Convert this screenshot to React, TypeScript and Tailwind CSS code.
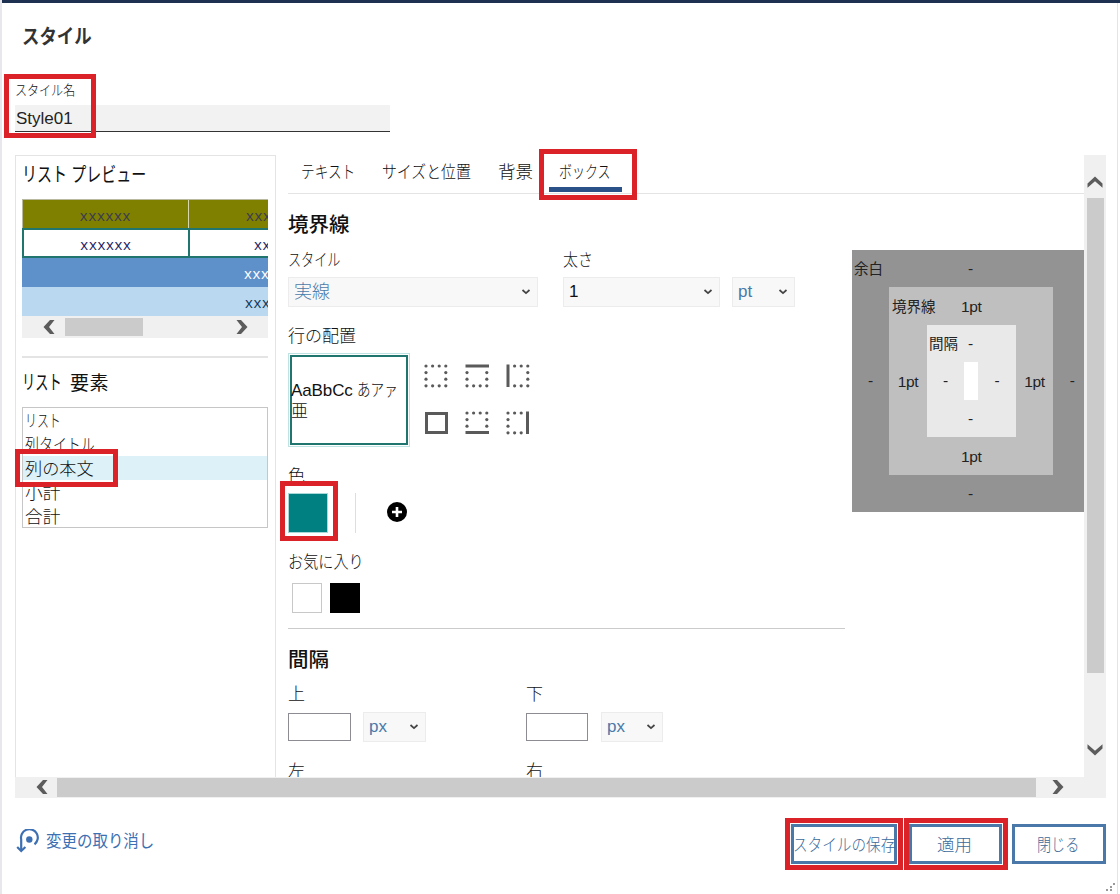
import { type ReactNode } from 'react';

const previewRows = [
  { id: 'title', a: 'xxxxxx', b: 'xxx' },
  { id: 'body', a: 'xxxxxx', b: 'xx' },
];

const elements = [
  { label: 'リスト', fit: 'scale-x-[.7]' },
  { label: '列タイトル', fit: 'scale-x-[.82]' },
  { label: '列の本文', fit: 'scale-x-[1.01]', selected: true },
  { label: '小計', fit: 'scale-x-[1.04]' },
  { label: '合計', fit: 'scale-x-[1.04]' },
];

// Red frames laid over the dialog
const marks = [
  'left-[4px] top-[74px] w-[92px] h-[64px]',
  'left-[15px] top-[449px] w-[103px] h-[38px]',
  'left-[539px] top-[149px] w-[98px] h-[51px]',
  'left-[280px] top-[481px] w-[58px] h-[60px]',
  'left-[785px] top-[818px] w-[118px] h-[52px]',
  'left-[904px] top-[818px] w-[104px] h-[52px]',
];

// Condensed Japanese label
function Ja({ children, fit = '', className = '' }: { children: ReactNode; fit?: string; className?: string }) {
  return <span className={`inline-block origin-left whitespace-nowrap ${fit} ${className}`}>{children}</span>;
}

function Arrow({ d, className = '' }: { d: string; className?: string }) {
  return (
    <svg className={`shrink-0 ${className}`} width="16" height="16" viewBox="0 0 16 16" fill="#5c5c5c">
      <path d={d} />
    </svg>
  );
}

const LEFT = 'M9 1h4.500L8 8l5.500 7H9L2.500 8z';
const RIGHT = 'M7 1H2.500L8 8l-5.500 7H7l6.500-7z';
const UP = 'M.500 9.500v4.200L8 7.200l7.500 6.500V9.500L8 2.500z';
const DOWN = 'M.500 6.500V2.300L8 8.800l7.500-6.500v4.200L8 13.500z';

function Select({ children, className }: { children: ReactNode; className: string }) {
  return (
    <div className={`flex h-[30px] items-center justify-between border border-[#ececec] bg-[#f8f8f8] pl-[5px] pr-[6px] text-[17px] leading-[28px] ${className}`}>
      {children}
      <svg width="10" height="8" viewBox="0 0 10 8" fill="none" stroke="#444" strokeWidth="1.7">
        <path d="M1.500 2L5 5.200 8.500 2" />
      </svg>
    </div>
  );
}

type Side = 'none' | 'top' | 'left' | 'all' | 'bottom' | 'right';

function BorderIcon({ side }: { side: Side }) {
  const dots: [number, number][] = [];
  const at = [2, 8.6, 15.2, 21.8];
  at.forEach(x => at.forEach(y => {
    const edge = x === 2 || x === 21.8 || y === 2 || y === 21.8;
    const hidden = (side === 'top' && y === 2) || (side === 'bottom' && y === 21.8)
      || (side === 'left' && x === 2) || (side === 'right' && x === 21.8);
    if (edge && !hidden) dots.push([x, y]);
  }));
  return (
    <svg width="24" height="24" viewBox="0 0 24 24" fill="#5a5a5a">
      {side === 'all'
        ? <rect x="2.500" y="2.500" width="20" height="19" fill="none" stroke="#5a5a5a" strokeWidth="3" />
        : dots.map(([x, y]) => <circle key={`${x}-${y}`} cx={x} cy={y} r="1.6" />)}
      {side === 'top' && <rect x="0.500" y="0.500" width="23.500" height="3" />}
      {side === 'bottom' && <rect x="0.500" y="20" width="23.500" height="3" />}
      {side === 'left' && <rect x="0.500" y="0.500" width="3" height="22.500" />}
      {side === 'right' && <rect x="20" y="0.500" width="3" height="22.500" />}
    </svg>
  );
}

function SpacingField({ label, short }: { label: string; short?: boolean }) {
  return (
    <div className={short ? 'w-[137px]' : 'w-[238px]'}>
      <div className="h-[28px] pt-px text-[17px] font-light leading-[20px]">{label}</div>
      <div className="flex items-center">
        <div className={`h-[28px] border border-[#8c8c92] bg-white ${short ? 'w-[62px]' : 'w-[63px]'}`} />
        <Select className={`text-[#4b7aa8] ${short ? 'ml-[13px] w-[62px]' : 'ml-3 w-[63px]'}`}><span>px</span></Select>
      </div>
    </div>
  );
}

function ListPanel() {
  return (
    <div className="flex w-[261px] shrink-0 flex-col border-x border-t border-[#e4e4e4] pl-[6px] pr-[7px]">
      <h2 className="h-[43px] pt-[6px] text-[20px] leading-[26px]"><Ja fit="scale-x-[.75]">リスト プレビュー</Ja></h2>
      <div className="h-[117px] overflow-hidden text-[15px] text-[#1f1f66] [font-family:'Open_Sans',sans-serif]">
        {previewRows.map(row => (
          <div
            key={row.id}
            className={row.id === 'title'
              ? 'flex h-[29px] border-l border-t border-[#b9b9a0] bg-[#808000] leading-[31px] text-[#3c3c50]'
              : 'flex h-[30px] border-y-2 border-l-2 border-[#20756f] leading-[28px]'}
          >
            <span className={row.id === 'title' ? 'w-[166px] shrink-0 border-r border-[#d8d8b0] text-center' : 'w-[166px] shrink-0 border-r-2 border-[#20756f] text-center'}>
              <Ja className="tracking-[.7px]">{row.a}</Ja>
            </span>
            <span className={row.id === 'title' ? 'pl-[57px]' : 'pl-[64px]'}><Ja className="tracking-[.7px]">{row.b}</Ja></span>
          </div>
        ))}
        <div className="h-[29px] bg-[#5e90ca] pl-[222px] leading-[30px] tracking-[.7px] text-white">xxx</div>
        <div className="h-[29px] bg-[#bad9f0] pl-[223px] leading-[30px] tracking-[.7px] text-[#123a5a]">xxx</div>
      </div>
      <div className="flex h-[22px] items-center bg-[#f0f0f0] pl-[19px]">
        <Arrow d={LEFT} />
        <div className="ml-2 h-[18px] w-[78px] bg-[#cbcbcb]" />
        <Arrow d={RIGHT} className="ml-[91px]" />
      </div>
      <div className="mt-[18px] border-t-2 border-[#e4e4e4]" />
      <h2 className="mt-3 h-[37px] text-[20px] leading-[26px]">
        <Ja fit="scale-x-[.66]">リスト</Ja><Ja className="-ml-[12px] text-[19px] tracking-[.6px]">要素</Ja>
      </h2>
      <ul className="h-[121px] overflow-hidden border border-[#c6c6c6] text-[17px] font-light text-[#111]">
        {elements.map(el => (
          <li key={el.label} className={`h-6 pl-[2px] leading-[27px] ${el.selected ? 'bg-[#dcf1f8]' : ''}`}>
            <Ja fit={el.fit}>{el.label}</Ja>
          </li>
        ))}
      </ul>
    </div>
  );
}

function BoxModel() {
  return (
    <div className="mt-[56px] h-[262px] w-[232px] shrink-0 bg-[#939393] text-[15.5px] leading-[18px] text-[#222]">
      <div className="flex h-[37px] items-center">
        <span className="w-[116px] pl-[2px] text-[14.5px]">余白</span><span>-</span>
      </div>
      <div className="flex">
        <span className="flex w-[37px] shrink-0 items-center justify-center">-</span>
        <div className="h-[188px] w-[164px] shrink-0 bg-[#bfbfbf]">
          <div className="flex h-[38px] items-center pt-[2px]">
            <span className="w-[72px] pl-[3px] text-[14.5px]">境界線</span><span className="tracking-[-.4px]">1pt</span>
          </div>
          <div className="flex">
            <span className="flex w-[38px] shrink-0 items-center justify-center pt-[2px] tracking-[-.4px]">1pt</span>
            <div className="h-[112px] w-[89px] shrink-0 bg-[#e9e9e9]">
              <div className="flex h-[37px] items-center pt-px">
                <span className="w-[41px] pl-[2px] text-[14.5px]">間隔</span><span>-</span>
              </div>
              <div className="flex h-[38px] items-center">
                <span className="w-[37px] text-center">-</span>
                <div className="h-full w-[14px] bg-white" />
                <span className="w-[38px] text-center">-</span>
              </div>
              <div className="flex h-[37px] items-center pl-[41px]">-</div>
            </div>
            <span className="flex w-[37px] shrink-0 items-center justify-center pt-[2px] tracking-[-.4px]">1pt</span>
          </div>
          <div className="flex h-[38px] items-center pl-[72px] pt-[2px] tracking-[-.4px]">1pt</div>
        </div>
        <span className="flex w-[31px] items-center justify-end pr-[9px]">-</span>
      </div>
      <div className="flex h-[37px] items-center pl-[116px]">-</div>
    </div>
  );
}

function BoxForm() {
  return (
    <div className="w-[557px] shrink-0 text-[17px] font-light leading-[22px]">
      <h2 className="mt-[19px] text-[20.500px] font-medium leading-[24px]">境界線</h2>
      <div className="mt-[13px] flex">
        <div className="w-[275px]">
          <Ja fit="scale-x-[.77]">スタイル</Ja>
          <Select className="mt-[5px] w-[250px] text-[#4b7aa8]"><span className="text-[18px]">実線</span></Select>
        </div>
        <div className="w-[169px]">
          <Ja fit="scale-x-[.88]">太さ</Ja>
          <Select className="mt-[5px] w-[157px]"><span>1</span></Select>
        </div>
        <Select className="mt-[27px] w-[63px] text-[#4b7aa8]"><span>pt</span></Select>
      </div>

      <div className="mt-[19px]"><Ja>行の配置</Ja></div>
      <div className="mt-[5px] flex">
        <div className="h-[94px] w-[122px] border border-[#bfe3e3] p-px">
          <div className="h-full border-2 border-[#20756f] pt-[23px] leading-[21px]">
            <div className="-ml-px whitespace-nowrap"><span className="tracking-[-.1px]">AaBbCc </span><Ja fit="scale-x-[.8]">あアァ</Ja></div>
            <div className="-ml-px">亜</div>
          </div>
        </div>
        <div className="ml-[14px] mt-[11px] grid h-[72px] grid-cols-[41px_41px_24px] grid-rows-[47px_24px]">
          {(['none', 'top', 'left', 'all', 'bottom', 'right'] as Side[]).map(side => <BorderIcon key={side} side={side} />)}
        </div>
      </div>

      <div className="mt-[19px]">色</div>
      <div className="mt-[5px] flex h-10 items-center">
        <div className="h-10 w-10 border border-[#a9d8d8] bg-[#008080]" />
        <div className="ml-[27px] h-10 border-l border-[#dedede]" />
        <svg className="-mt-[2px] ml-[31px]" width="20" height="20" viewBox="0 0 20 20">
          <circle cx="10" cy="10" r="10" />
          <path d="M5 10h10M10 5v10" stroke="white" strokeWidth="2.600" />
        </svg>
      </div>

      <div className="mt-[19px]"><Ja fit="scale-x-[.89]">お気に入り</Ja></div>
      <div className="mt-[9px] flex gap-2 pl-1">
        <div className="h-[30px] w-[30px] border border-[#c8c8c8]" />
        <div className="h-[30px] w-[30px] bg-black" />
      </div>
      <div className="mt-[15px] border-t border-[#cbcbcb]" />
      <h2 className="mt-[19px] text-[20.500px] font-medium leading-[24px]">間隔</h2>
      <div className="mt-[12px] flex"><SpacingField label="上" /><SpacingField label="下" short /></div>
      <div className="mt-[19px] flex"><SpacingField label="左" /><SpacingField label="右" short /></div>
    </div>
  );
}

function Tabs() {
  return (
    <div className="flex h-[39px] border-b border-[#e4e4e4] pl-[13px] pt-[5px] text-[17.5px] font-light leading-[24px]">
      <div className="w-[81px]"><Ja fit="scale-x-[.78]">テキスト</Ja></div>
      <div className="w-[116px]"><Ja fit="scale-x-[.85]">サイズと位置</Ja></div>
      <div className="w-[51px]"><Ja>背景</Ja></div>
      <div className="h-[32px] w-[73px] border-b-[5px] border-[#2b5288] pl-[10px]"><Ja fit="scale-x-[.74]">ボックス</Ja></div>
    </div>
  );
}

export default function App() {
  return (
    <div className="relative flex h-[894px] w-[1120px] flex-col overflow-hidden border-l-2 border-l-[#e8e8ec] bg-white text-[#111] [font-family:'Liberation_Sans','Noto_Sans_CJK_JP',sans-serif]">
      <div className="h-[3px] shrink-0 bg-[#1f3150]" />
      <h1 className="ml-5 mt-[21px] h-[54px] text-[20px] font-bold leading-[26px] text-[#333]"><Ja fit="scale-x-[.87]">スタイル</Ja></h1>
      <div className="ml-[13px] w-[375px]">
        <div className="mt-[2px] h-[25px] text-[14px] font-light leading-[20px]"><Ja fit="scale-x-[.86]">スタイル名</Ja></div>
        <div className="h-[27px] border-b border-[#333] bg-[#f2f2f2] pl-px text-[17px] leading-[27px] text-[#222]">Style01</div>
      </div>

      <div className="ml-[13px] mt-[23px] w-[1091px]">
        <div className="flex h-[622px] overflow-hidden">
          <ListPanel />
          <div className="w-[808px] shrink-0 pl-3">
            <Tabs />
            <div className="flex gap-[7px]">
              <BoxForm />
              <BoxModel />
            </div>
          </div>
          <div className="flex w-[22px] flex-col items-center bg-[#f0f0f0] pt-[19px]">
            <Arrow d={UP} />
            <div className="mt-2 h-[475px] w-[17px] shrink-0 bg-[#cbcbcb]" />
            <Arrow d={DOWN} className="mt-[69px]" />
          </div>
        </div>
        <div className="flex h-[21px] items-center bg-[#f0f0f0] pl-[19px]">
          <Arrow d={LEFT} className="-mt-px" />
          <div className="ml-[7px] h-[19px] w-[979px] bg-[#cbcbcb]" />
          <Arrow d={RIGHT} className="-mt-px ml-[14px]" />
        </div>
      </div>

      <div className="ml-[14px] mt-[26px] flex h-[40px] w-[1090px] text-[17px]">
        <div className="flex h-[36px] flex-1 items-center text-[#3d70b2]">
          <svg className="-mt-[3px]" width="24" height="24" viewBox="0 0 24 24" fill="none" stroke="#3d70b2" strokeWidth="2.200">
            <path d="M5.200 21.500V10.500a8.400 8.400 0 1 1 13.300 4.800" />
            <path d="M1.200 18L5.200 22l4.200-4" />
            <circle cx="13.300" cy="10.500" r="3.200" fill="#3d70b2" stroke="none" />
          </svg>
          <Ja fit="scale-x-[.91]" className="ml-[6px]">変更の取り消し</Ja>
        </div>
        <button className="h-10 w-[106px] border-[3px] border-[#4a78a8] pt-[3px] text-left font-light text-[#3c6a9a]"><Ja fit="scale-x-[.86]" className="w-[100px] -translate-x-px">スタイルの保存</Ja></button>
        <button className="ml-3 h-10 w-[93px] border-[3px] border-[#4a78a8] pr-[2px] pt-[3px] text-[17.5px] font-light text-[#3c6a9a]">適用</button>
        <button className="ml-[10px] h-10 w-[94px] border-[3px] border-[#4a78a8] pl-[22px] pt-[3px] text-left font-light text-[#3c6a9a]"><Ja fit="scale-x-[.83]">閉じる</Ja></button>
      </div>

      {/* Slivers of the page behind the dialog */}
      <div className="absolute -left-[2px] top-[100px] h-[36px] w-[2px] border-b-[6px] border-black bg-[#8a8840]" />
      <div className="absolute -left-[2px] top-[164px] h-[5px] w-[2px] bg-black" />
      <div className="absolute -left-[2px] top-[195px] h-[5px] w-[2px] bg-black" />
      <div className="absolute -left-[2px] top-[227px] h-[8px] w-[2px] bg-[#333]" />
      {marks.map(place => <div key={place} className={`absolute -ml-[2px] border-[5px] border-[#dc2229] ${place}`} />)}
      <div className="absolute right-[2px] top-[3px] h-[891px] border-r border-[#e4e4e8]" />
      <svg className="absolute bottom-[1px] right-[3px]" width="12" height="12" viewBox="0 0 12 12" fill="#999">
        <path d="M1 8h2v2H1zM5 5h2v2H5zM5 8h2v2H5zM8 2h2v2H8z" />
      </svg>
    </div>
  );
}
